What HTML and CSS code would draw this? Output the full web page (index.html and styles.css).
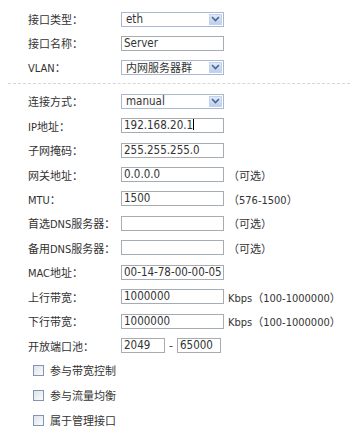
FILE: index.html
```html
<!doctype html>
<html lang="zh-CN">
  <head>
    <meta charset="UTF-8" />
    <title>接口设置</title>
    <link rel="stylesheet" href="styles.css">
  </head>
  <body>
    <div class="form">
      <div class="section">
        <div class="row">
          <span class="label">接口类型：</span>
          <div class="select"><span class="value">eth</span><span class="arrow"><svg width="9" height="6" viewBox="0 0 9 6"><path d="M1 1 L4.5 4.5 L8 1" fill="none" stroke="#4a6391" stroke-width="1.6"/></svg></span></div>
        </div>
        <div class="row">
          <span class="label">接口名称：</span>
          <div class="field">Server</div>
        </div>
        <div class="row">
          <span class="label">VLAN：</span>
          <div class="select"><span class="value cjk">内网服务器群</span><span class="arrow"><svg width="9" height="6" viewBox="0 0 9 6"><path d="M1 1 L4.5 4.5 L8 1" fill="none" stroke="#4a6391" stroke-width="1.6"/></svg></span></div>
        </div>
      </div>

      <div class="divider"></div>

      <div class="section wide">
        <div class="row">
          <span class="label">连接方式：</span>
          <div class="select"><span class="value">manual</span><span class="arrow"><svg width="9" height="6" viewBox="0 0 9 6"><path d="M1 1 L4.5 4.5 L8 1" fill="none" stroke="#4a6391" stroke-width="1.6"/></svg></span></div>
        </div>
        <div class="row">
          <span class="label">IP地址：</span>
          <div class="field">192.168.20.1<span class="caret"></span></div>
        </div>
        <div class="row">
          <span class="label">子网掩码：</span>
          <div class="field">255.255.255.0</div>
        </div>
        <div class="row">
          <span class="label">网关地址：</span>
          <div class="field">0.0.0.0</div>
          <span class="hint">（可选）</span>
        </div>
        <div class="row">
          <span class="label">MTU：</span>
          <div class="field">1500</div>
          <span class="hint">（576-1500）</span>
        </div>
        <div class="row">
          <span class="label">首选DNS服务器：</span>
          <div class="field"></div>
          <span class="hint">（可选）</span>
        </div>
        <div class="row">
          <span class="label">备用DNS服务器：</span>
          <div class="field"></div>
          <span class="hint">（可选）</span>
        </div>
        <div class="row">
          <span class="label">MAC地址：</span>
          <div class="field">00-14-78-00-00-05</div>
        </div>
        <div class="row">
          <span class="label">上行带宽：</span>
          <div class="field">1000000</div>
          <span class="hint">Kbps（100-1000000）</span>
        </div>
        <div class="row">
          <span class="label">下行带宽：</span>
          <div class="field">1000000</div>
          <span class="hint">Kbps（100-1000000）</span>
        </div>
        <div class="row">
          <span class="label">开放端口池：</span>
          <div class="field short">2049</div>
          <span class="dash">-</span>
          <div class="field short">65000</div>
        </div>
      </div>

      <div class="checks">
        <label class="check"><span class="box"></span>参与带宽控制</label>
        <label class="check"><span class="box"></span>参与流量均衡</label>
        <label class="check"><span class="box"></span>属于管理接口</label>
      </div>
    </div>
  </body>
</html>
```

FILE: styles.css
```css
body {
  margin: 0;
  background: #fff;
  color: #333;
  font-family: "DejaVu Sans", "Noto Sans CJK SC", sans-serif;
  font-size: 12px;
}

.form {
  padding: 7px 8px 0 8px;
}

.section {
  padding-left: 20px;
}

.row {
  display: flex;
  align-items: center;
  height: 24px;
}

.wide .row {
  height: 24.45px;
}

.label {
  width: 93px;
  flex: none;
  font-family: "DejaVu Sans Condensed", "Noto Sans CJK SC", sans-serif;
  font-size: 11px;
  color: #333;
  white-space: nowrap;
}

.field,
.select {
  box-sizing: border-box;
  width: 103px;
  height: 15px;
  border: 1px solid #a5acb2;
  background: #fff;
  font-family: "DejaVu Sans Condensed", sans-serif;
  font-size: 11.5px;
  line-height: 13px;
  padding-left: 2px;
  color: #333;
  white-space: nowrap;
  overflow: hidden;
}

.field.short {
  width: 44px;
}

.caret {
  display: inline-block;
  width: 1px;
  height: 11px;
  background: #000;
  vertical-align: -1px;
}

.select {
  display: flex;
  align-items: center;
  justify-content: space-between;
  border-color: #a9b8cf;
  padding: 0 1px 0 4px;
}

.value.cjk {
  font-family: "Noto Sans CJK SC", sans-serif;
  font-size: 11px;
}

.arrow {
  width: 13px;
  height: 11px;
  background: linear-gradient(#dfe9fa, #bccfee);
  border: 1px solid #c3d3ec;
  box-sizing: border-box;
  display: flex;
  align-items: center;
  justify-content: center;
}

.hint {
  margin-left: 4px;
  font-family: "DejaVu Sans Condensed", "Noto Sans CJK SC", sans-serif;
  font-size: 11px;
  color: #333;
  white-space: nowrap;
}

.dash {
  margin: 0 4px;
  font-size: 11px;
}

.divider {
  margin: 4px 0 5px 0;
  border-top: 1px dashed #d6d6d6;
}

.checks {
  padding: 0 0 0 25px;
}

.check {
  display: flex;
  align-items: center;
  height: 25px;
  font-family: "Noto Sans CJK SC", sans-serif;
  font-size: 11px;
  color: #333;
}

.box {
  box-sizing: border-box;
  width: 11px;
  height: 11px;
  border: 1px solid #8096b4;
  background: linear-gradient(135deg, #dfe3ea, #fbfbfb);
  margin-right: 6px;
}
```
